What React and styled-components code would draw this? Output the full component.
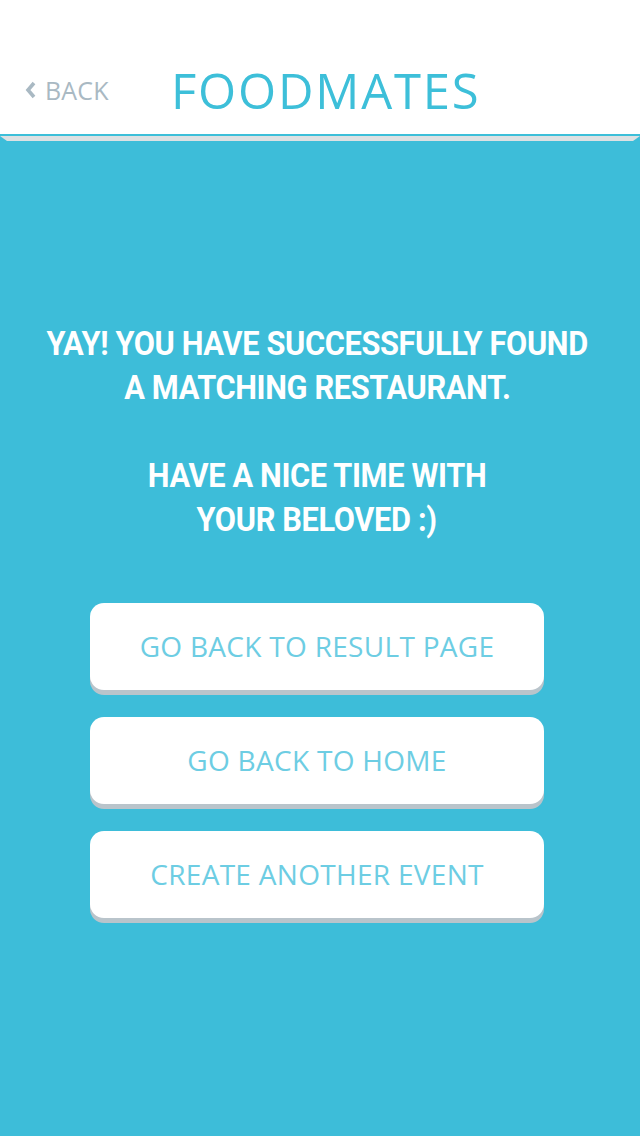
import styled, { createGlobalStyle } from 'styled-components';

const GlobalStyle = createGlobalStyle`
  html, body {
    margin: 0;
    padding: 0;
    background: #3dbdd9;
  }
`;

const Page = styled.div`
  width: 640px;
  min-height: 1136px;
  background: #3dbdd9;
  display: flex;
  flex-direction: column;
  overflow: hidden;
`;

const Header = styled.header`
  height: 134px;
  background: #fff;
  display: flex;
  align-items: center;
  padding: 46px 0 0 24px;
  box-sizing: border-box;
`;

const BackLink = styled.a`
  display: flex;
  align-items: center;
  gap: 9px;
  color: #a9b9c3;
  font-family: 'Open Sans', sans-serif;
  font-size: 25px;
  text-decoration: none;
  letter-spacing: 0.2px;
  width: 147px;
`;

const Title = styled.h1`
  margin: 0;
  color: #3dbfd9;
  font-family: 'Open Sans', sans-serif;
  font-weight: 400;
  font-size: 49px;
  letter-spacing: 1.8px;
`;

const HeaderEdge = styled.div`
  height: 2px;
  background: #3dbfd9;
`;

const Bevel = styled.div`
  height: 5px;
  background: #dde1e3;
  clip-path: polygon(0 0, 100% 0, calc(100% - 7px) 100%, 7px 100%);
`;

const Content = styled.main`
  display: flex;
  flex-direction: column;
  align-items: center;
  padding: 180px 6px 0 0;
`;

const Message = styled.div`
  display: flex;
  flex-direction: column;
  align-items: center;
  width: 634px;
`;

const Line = styled.span`
  display: block;
  white-space: nowrap;
  color: #fff;
  font-family: 'Roboto', 'Liberation Sans', sans-serif;
  font-weight: 700;
  font-size: 34px;
  line-height: 44px;
  letter-spacing: -0.4px;
  transform: scaleX(0.905);
  margin-top: ${(p) => (p.$gap ? '44px' : '0')};
`;

const Actions = styled.div`
  display: flex;
  flex-direction: column;
  gap: 22px;
  margin-top: 62px;
`;

const ActionButton = styled.button`
  width: 454px;
  height: 87px;
  border: none;
  border-radius: 14px;
  background: #fff;
  box-shadow: 0 5px 0 #b9c4cb;
  margin-bottom: 5px;
  color: #6dcde3;
  font-family: 'Open Sans', sans-serif;
  font-size: 28px;
  letter-spacing: 0.3px;
  padding: 0 0 2px;
  cursor: pointer;
`;

const Chevron = () => (
  <svg width="12" height="20" viewBox="0 0 12 20">
    <path d="M10 3 L4 10 L10 17" fill="none" stroke="#a9b9c3" strokeWidth="3.6" />
  </svg>
);

const App = () => {
  return (
    <Page>
      <GlobalStyle />
      <Header>
        <BackLink href="#">
          <Chevron />
          BACK
        </BackLink>
        <Title>FOODMATES</Title>
      </Header>
      <HeaderEdge />
      <Bevel />
      <Content>
        <Message>
          <Line>YAY! YOU HAVE SUCCESSFULLY FOUND</Line>
          <Line>A MATCHING RESTAURANT.</Line>
          <Line $gap>HAVE A NICE TIME WITH</Line>
          <Line>YOUR BELOVED :)</Line>
        </Message>
        <Actions>
          <ActionButton>GO BACK TO RESULT PAGE</ActionButton>
          <ActionButton>GO BACK TO HOME</ActionButton>
          <ActionButton>CREATE ANOTHER EVENT</ActionButton>
        </Actions>
      </Content>
    </Page>
  );
};

export default App;
